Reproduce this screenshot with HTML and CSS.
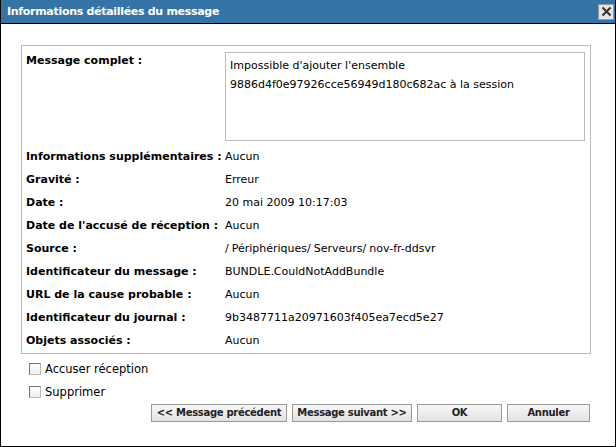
FILE: index.html
```html
<!DOCTYPE html>
<html lang="fr">
<head>
<meta charset="utf-8">
<link rel="stylesheet" href="styles.css">
</head>
<body>
<div class="dialog">
  <div class="titlebar">
    <span class="title">Informations détaillées du message</span>
    <span class="close"><svg width="11" height="11" viewBox="0 0 11 11"><path d="M1.5 1.5 L9.5 9.5 M9.5 1.5 L1.5 9.5" stroke="#333" stroke-width="2"/></svg></span>
  </div>
  <div class="content">
    <div class="panel">
      <div class="label top">Message complet :</div>
      <div class="value"><div class="textarea">Impossible d'ajouter l'ensemble<br>9886d4f0e97926cce56949d180c682ac à la session</div></div>
      <div class="label">Informations supplémentaires :</div><div class="value">Aucun</div>
      <div class="label">Gravité :</div><div class="value">Erreur</div>
      <div class="label">Date :</div><div class="value">20 mai 2009 10:17:03</div>
      <div class="label">Date de l'accusé de réception :</div><div class="value">Aucun</div>
      <div class="label">Source :</div><div class="value"><span class="sep">/</span>Périphériques<span class="sep">/</span>Serveurs<span class="sep">/</span>nov-fr-ddsvr</div>
      <div class="label">Identificateur du message :</div><div class="value">BUNDLE.CouldNotAddBundle</div>
      <div class="label">URL de la cause probable :</div><div class="value">Aucun</div>
      <div class="label">Identificateur du journal :</div><div class="value">9b3487711a20971603f405ea7ecd5e27</div>
      <div class="label">Objets associés :</div><div class="value">Aucun</div>
    </div>
    <label class="check"><span class="box"></span>Accuser réception</label>
    <label class="check"><span class="box"></span>Supprimer</label>
    <div class="buttons">
      <button class="btn prev">&lt;&lt; Message précédent</button>
      <button class="btn next">Message suivant &gt;&gt;</button>
      <button class="btn ok">OK</button>
      <button class="btn cancel">Annuler</button>
    </div>
  </div>
</div>
</body>
</html>
```
FILE: styles.css
```css
html, body {
  margin: 0;
  padding: 0;
  background: #fff;
}
body {
  font-family: "DejaVu Sans", Verdana, sans-serif;
  font-size: 11px;
  color: #000;
}
.dialog {
  width: 616px;
  height: 447px;
  box-sizing: border-box;
  border: 1px solid #000;
  border-top: none;
  display: flex;
  flex-direction: column;
}
.titlebar {
  height: 23px;
  background: #3574a7;
  border-bottom: 1px solid #000;
  display: flex;
  align-items: center;
  justify-content: space-between;
  padding: 0 1px 0 6px;
}
.title {
  color: #fff;
  font-weight: bold;
  font-size: 11px;
  letter-spacing: -0.3px;
}
.close {
  width: 14px;
  height: 14px;
  background: #e4e4e4;
  border: 1px solid #9a9a9a;
  display: flex;
  align-items: center;
  justify-content: center;
}
.content {
  padding: 21px 24px 0 20px;
}
.panel {
  border: 1px solid #bbb;
  display: grid;
  grid-template-columns: 199px 1fr;
  padding: 6px 5px 1px 4px;
}
.label {
  font-weight: bold;
  line-height: 23px;
  white-space: nowrap;
}
.label.top {
  line-height: 18px;
}
.value {
  line-height: 23px;
  white-space: nowrap;
}
.sep {
  margin-right: 3px;
}
.textarea {
  width: 360px;
  height: 89px;
  box-sizing: border-box;
  border: 1px solid #bbb;
  padding: 3px 4px;
  line-height: 19px;
  margin-bottom: 4px;
}
.check {
  display: flex;
  align-items: center;
  height: 23px;
  padding-left: 8px;
  font-size: 11.5px;
}
.check:first-of-type {
  margin-top: 3px;
}
.box {
  width: 10px;
  height: 10px;
  border: 1px solid #777;
  border-right-color: #bbb;
  border-bottom-color: #bbb;
  background: linear-gradient(#fff, #eee);
  margin-right: 4px;
}
.buttons {
  display: flex;
  justify-content: flex-end;
  gap: 5px;
  margin-top: 1px;
  padding-right: 1px;
}
.btn {
  height: 18px;
  box-sizing: border-box;
  border: 1px solid #999;
  background: linear-gradient(#f7f7f7, #e2e2e2);
  font-family: "DejaVu Sans", Verdana, sans-serif;
  font-weight: bold;
  font-size: 10px;
  letter-spacing: -0.3px;
  white-space: nowrap;
  color: #222;
  padding: 0;
  line-height: 16px;
}
.prev { width: 136px; }
.next { width: 120px; }
.ok { width: 85px; }
.cancel { width: 83px; }
```
